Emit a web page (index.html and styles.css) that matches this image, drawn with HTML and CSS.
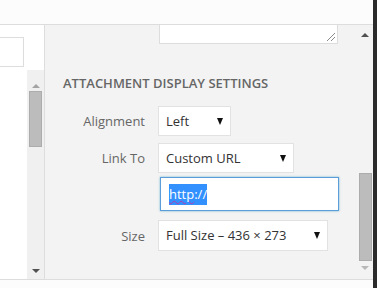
FILE: index.html
```html
<!DOCTYPE html>
<html lang="en">
<head>
  <meta charset="UTF-8">
  <title>Attachment Display Settings</title>
  <link rel="stylesheet" href="styles.css">
</head>
<body>
  <div class="frame">
    <div class="topbar"></div>

    <div class="main">
      <div class="library">
        <div class="search-row">
          <div class="search-box"></div>
        </div>
        <div class="browser">
          <div class="browser-list"></div>
          <div class="scrollbar scrollbar-left">
            <span class="arrow arrow-up"></span>
            <span class="thumb thumb-left"></span>
            <span class="track"></span>
            <span class="arrow arrow-down"></span>
          </div>
        </div>
      </div>

      <div class="sidebar">
        <div class="settings">
          <div class="caption-box"><span class="grip"></span></div>

          <h2>Attachment Display Settings</h2>

          <div class="setting setting-align">
            <span class="label">Alignment</span>
            <div class="select select-align">Left<span class="caret"></span></div>
          </div>

          <div class="setting setting-link">
            <span class="label">Link To</span>
            <div class="select select-link">Custom URL<span class="caret"></span></div>
          </div>

          <div class="setting setting-url">
            <span class="label"></span>
            <div class="url-input"><span class="selected"><span class="misspelled">http</span>://</span></div>
          </div>

          <div class="setting setting-size">
            <span class="label">Size</span>
            <div class="select select-size">Full Size – 436 × 273<span class="caret"></span></div>
          </div>
        </div>

        <div class="scrollbar scrollbar-right">
          <span class="arrow arrow-up"></span>
          <span class="track"></span>
          <span class="thumb thumb-right"></span>
          <span class="arrow arrow-down arrow-faded"></span>
        </div>
      </div>
    </div>

    <div class="bottombar"></div>
  </div>
  <div class="edge"></div>
</body>
</html>
```

FILE: styles.css
```css
* {
  margin: 0;
  padding: 0;
  box-sizing: border-box;
}

body {
  font-family: 'Open Sans', 'Segoe UI', sans-serif;
  background: #fcfcfc;
  color: #32373c;
  width: 377px;
  height: 288px;
  overflow: hidden;
  display: flex;
}

.frame {
  width: 373px;
  display: flex;
  flex-direction: column;
}

.edge {
  width: 4px;
  background: #2b2b2b;
}

.topbar {
  height: 25px;
  background: #fcfcfc;
  border-bottom: 1px solid #dddddd;
}

.main {
  height: 254px;
  display: flex;
}

.bottombar {
  flex: 1;
  background: #fcfcfc;
  border-top: 1px solid #dddddd;
}

/* left: media library */
.library {
  width: 45px;
  background: #ffffff;
  border-right: 1px solid #dddddd;
  display: flex;
  flex-direction: column;
}

.search-row {
  height: 45px;
  padding-top: 12px;
}

.search-box {
  width: 25px;
  height: 30px;
  margin-left: -1px;
  border: 1px solid #dddddd;
  background: #ffffff;
}

.browser {
  flex: 1;
  display: flex;
}

.browser-list {
  width: 27px;
}

.scrollbar {
  display: flex;
  flex-direction: column;
  align-items: center;
}

.scrollbar-left {
  width: 17px;
  background: #f0f0f0;
  padding: 14px 0 6px;
}

.thumb {
  display: block;
  width: 13px;
  background: #bcbcbc;
  border: 1px solid #acacac;
}

.thumb-left {
  height: 56px;
  margin-top: 3px;
}

.thumb-right {
  height: 88px;
}

.track {
  flex: 1;
}

.arrow {
  display: block;
  width: 0;
  height: 0;
  border-left: 4px solid transparent;
  border-right: 4px solid transparent;
}

.arrow-up {
  border-bottom: 4px solid #a3a3a3;
}

.arrow-down {
  border-top: 4px solid #505050;
}

.scrollbar-right .arrow-up {
  border-bottom-color: #505050;
}

.arrow-faded {
  border-top-color: #b8b8b8;
  margin-top: 5px;
}

/* right: attachment details sidebar */
.sidebar {
  flex: 1;
  background: #f3f3f3;
  display: flex;
}

.settings {
  flex: 1;
  padding-left: 18px;
}

.scrollbar-right {
  width: 14px;
  padding: 8px 0 9px;
  margin-right: 1px;
}

.caption-box {
  position: relative;
  width: 179px;
  height: 19px;
  margin-left: 96px;
  background: #ffffff;
  border: 1px solid #dddddd;
  border-top: none;
}

.grip {
  position: absolute;
  right: 2px;
  bottom: 2px;
  width: 8px;
  height: 8px;
  background: linear-gradient(135deg, transparent 45%, #8a8a8a 45%, #8a8a8a 55%, transparent 55%, transparent 70%, #8a8a8a 70%, #8a8a8a 80%, transparent 80%);
}

h2 {
  margin-top: 30px;
  font-size: 13px;
  font-weight: 600;
  line-height: 19px;
  text-transform: uppercase;
  color: #666666;
}

.setting {
  display: flex;
  align-items: center;
}

.label {
  width: 82px;
  text-align: right;
  font-size: 13px;
  color: #666666;
  margin-right: 13px;
}

.setting-align {
  margin-top: 13px;
}

.setting-link {
  margin-top: 7px;
}

.setting-url {
  margin-top: 4px;
}

.setting-size {
  margin-top: 9px;
}

.select {
  position: relative;
  height: 30px;
  padding: 0 0 0 7px;
  background: #ffffff;
  border: 1px solid #e2e2e2;
  font-size: 13px;
  line-height: 28px;
  color: #333333;
}

.select-align {
  width: 73px;
}

.select-link {
  width: 136px;
}

.select-size {
  width: 170px;
  height: 31px;
}

.caret {
  position: absolute;
  right: 7px;
  top: 11px;
  width: 0;
  height: 0;
  border-left: 3px solid transparent;
  border-right: 3px solid transparent;
  border-top: 7px solid #111111;
}

.url-input {
  width: 179px;
  height: 34px;
  margin-left: 2px;
  padding-left: 8px;
  background: #ffffff;
  border: 1px solid #5b9dd9;
  box-shadow: 0 0 2px rgba(30, 140, 190, 0.6);
  font-size: 13px;
  line-height: 32px;
}

.selected {
  background: #3390ff;
  color: #ffffff;
  padding: 1px 0 2px;
}

.misspelled {
  text-decoration: underline wavy #b03cb0;
  text-decoration-thickness: 1px;
}
```
